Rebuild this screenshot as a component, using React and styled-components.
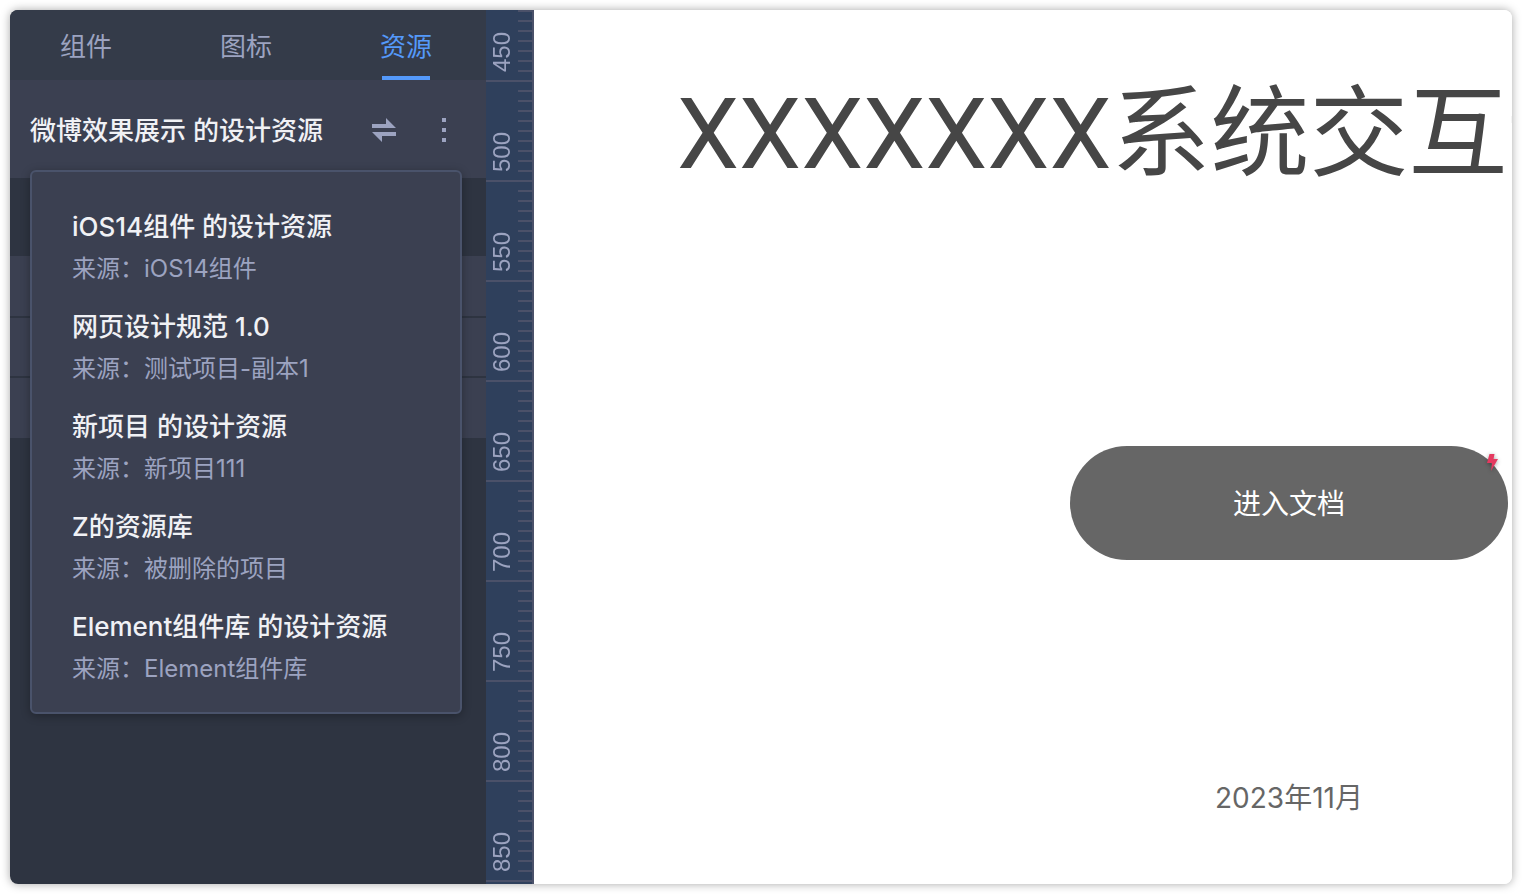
import React from 'react';
import styled, { createGlobalStyle } from 'styled-components';

const tabs = ['组件', '图标', '资源'];

const libraries = [
    { name: 'iOS14组件 的设计资源', source: 'iOS14组件' },
    { name: '网页设计规范 1.0', source: '测试项目-副本1' },
    { name: '新项目 的设计资源', source: '新项目111' },
    { name: 'Z的资源库', source: '被删除的项目' },
    { name: 'Element组件库 的设计资源', source: 'Element组件库' },
];

const marks = [450, 500, 550, 600, 650, 700, 750, 800, 850];

function SwapIcon() {
    return (
        <svg width="24" height="24" viewBox="0 0 24 24" fill="currentColor" aria-hidden="true">
            <path d="M0 6H14V0L24 10H0Z" />
            <path d="M24 18H10V24L0 14H24Z" />
        </svg>
    );
}

function MoreIcon() {
    return (
        <svg width="4" height="24" viewBox="0 0 4 24" fill="currentColor" aria-hidden="true">
            <rect width="4" height="4" />
            <rect y="10" width="4" height="4" />
            <rect y="20" width="4" height="4" />
        </svg>
    );
}

function Sidebar() {
    return (
        <SidebarStyled>
            <TabBar role="tablist">
                {tabs.map((tab) => (
                    <Tab key={tab} type="button" role="tab" aria-selected={tab === '资源'} $active={tab === '资源'}>
                        {tab}
                    </Tab>
                ))}
            </TabBar>
            <LibraryHeader>
                <LibraryTitle>微博效果展示 的设计资源</LibraryTitle>
                <IconButton type="button" aria-label="切换">
                    <SwapIcon />
                </IconButton>
                <IconButton type="button" aria-label="更多">
                    <MoreIcon />
                </IconButton>
                <LibraryMenu>
                    {libraries.map((library) => (
                        <li key={library.name}>
                            <LibraryItem type="button">
                                <span className="name">{library.name}</span>
                                <span className="source">来源：{library.source}</span>
                            </LibraryItem>
                        </li>
                    ))}
                </LibraryMenu>
            </LibraryHeader>
            <GroupList>
                <Group />
                <Group />
                <Group />
            </GroupList>
        </SidebarStyled>
    );
}

function Ruler() {
    return (
        <RulerStyled>
            {marks.map((mark) => (
                <RulerStep key={mark}>
                    <span>{mark}</span>
                </RulerStep>
            ))}
        </RulerStyled>
    );
}

function App() {
    return (
        <>
            <GlobalStyle />
            <AppWindow>
                <Sidebar />
                <Ruler />
                <Canvas>
                    <DocTitle>XXXXXXX系统交互说</DocTitle>
                    <DocColumn>
                        <EnterButton type="button">
                            进入文档
                            <Bolt viewBox="0 0 12 17" aria-hidden="true">
                                <path d="M2.5 0H7.5L6.5 5H11L4 17L5 9H0Z" />
                            </Bolt>
                        </EnterButton>
                        <DocDate>2023年11月</DocDate>
                    </DocColumn>
                </Canvas>
            </AppWindow>
        </>
    );
}

const GlobalStyle = createGlobalStyle`
    * {
        box-sizing: border-box;
    }
    body {
        margin: 0;
        background: #fff;
        font-family: Inter, "Noto Sans CJK SC", sans-serif;
    }
    button {
        padding: 0;
        border: 0;
        background: none;
        font-family: inherit;
        cursor: pointer;
    }
`;

const AppWindow = styled.div`
    display: flex;
    height: calc(100vh - 20px);
    margin: 10px;
    border-radius: 8px;
    overflow: hidden;
    background: #fff;
    box-shadow: 0 0 10px rgba(0, 0, 0, .35);
`;

const SidebarStyled = styled.aside`
    flex: 0 0 476px;
    background: #2e3441;
`;

const TabBar = styled.div`
    display: flex;
    justify-content: space-between;
    height: 70px;
    padding: 0 54px 0 50px;
    background: #343b49;
`;

const Tab = styled.button`
    position: relative;
    padding-top: 4px;
    line-height: 66px;
    font-size: 26px;
    color: ${({ $active }) => ($active ? '#5499fa' : '#9ca3c0')};
    &::after {
        content: '';
        display: ${({ $active }) => ($active ? 'block' : 'none')};
        position: absolute;
        left: 2px;
        right: 2px;
        bottom: 0;
        height: 4px;
        background: #5499fa;
    }
`;

const LibraryHeader = styled.div`
    position: relative;
    display: flex;
    align-items: center;
    height: 98px;
    padding: 2px 20px 0;
    background: #3b4051;
`;

const LibraryTitle = styled.h2`
    flex: 1;
    margin: 0;
    padding-bottom: 4px;
    font-size: 26px;
    font-weight: 500;
    color: #f0f1f5;
`;

const IconButton = styled.button`
    display: flex;
    align-items: center;
    justify-content: center;
    width: 60px;
    height: 40px;
    margin-right: -8px;
    margin-left: 8px;
    color: #9ca3c0;
`;

const LibraryMenu = styled.ul`
    position: absolute;
    z-index: 1;
    top: 90px;
    left: 20px;
    right: 24px;
    margin: 0;
    padding: 20px 40px;
    list-style: none;
    border: 2px solid #4a536b;
    border-radius: 6px;
    background: #3b4051;
    box-shadow: 0 2px 10px rgba(0, 0, 0, .3);
`;

const LibraryItem = styled.button`
    display: flex;
    flex-direction: column;
    width: 100%;
    height: 100px;
    padding: 14px 0 2px;
    text-align: left;
    white-space: nowrap;
    .name {
        line-height: 42px;
        font-size: 26px;
        font-weight: 500;
        color: #f0f1f5;
    }
    .source {
        line-height: 42px;
        font-size: 24px;
        color: #9ca3c0;
    }
`;

const GroupList = styled.div`
    margin-top: 78px;
    padding-top: 2px;
    background: #3b4051;
`;

const Group = styled.div`
    height: 60px;
    border-bottom: 2px solid #2e3441;
    &:last-child {
        border-bottom: 0;
    }
`;

const RulerStyled = styled.div`
    display: flex;
    flex: 0 0 48px;
    flex-direction: column;
    overflow: hidden;
    border-right: 2px solid #4b5169;
    background: #2f405c;
`;

const RulerStep = styled.div`
    display: flex;
    flex: 0 0 100px;
    align-items: flex-end;
    padding: 0 0 8px 2px;
    border-bottom: 2px solid #4b5169;
    background: repeating-linear-gradient(to top, transparent 0 8px, #4b5169 8px 10px) right bottom / 14px 100% no-repeat;
    &:first-child {
        flex-basis: 72px;
    }
    span {
        writing-mode: vertical-rl;
        transform: rotate(180deg);
        line-height: 28px;
        font-family: "Liberation Sans", Arial, sans-serif;
        font-size: 24px;
        color: #9ca3c0;
    }
`;

const Canvas = styled.main`
    flex: 1;
    min-width: 0;
    overflow: hidden;
    background: #fff;
`;

const DocTitle = styled.h1`
    margin: 54px 0 0 143px;
    line-height: 140px;
    font-family: Roboto, "Noto Sans CJK SC", sans-serif;
    font-size: 99px;
    font-weight: 400;
    white-space: nowrap;
    color: #464646;
`;

const DocColumn = styled.div`
    display: flex;
    flex-direction: column;
    width: 438px;
    margin: 242px 4px 0 auto;
`;

const EnterButton = styled.button`
    position: relative;
    height: 114px;
    padding-bottom: 2px;
    border-radius: 57px;
    background: #666;
    font-size: 28px;
    color: #fff;
`;

const Bolt = styled.svg`
    position: absolute;
    top: 8px;
    right: 9px;
    width: 12px;
    height: 17px;
    overflow: visible;
    fill: #e5395f;
    filter: drop-shadow(0 1px 2px rgba(0, 0, 0, .4));
`;

const DocDate = styled.p`
    margin: 218px 0 0;
    line-height: 40px;
    font-size: 28px;
    text-align: center;
    color: #666;
`;

export default App;
